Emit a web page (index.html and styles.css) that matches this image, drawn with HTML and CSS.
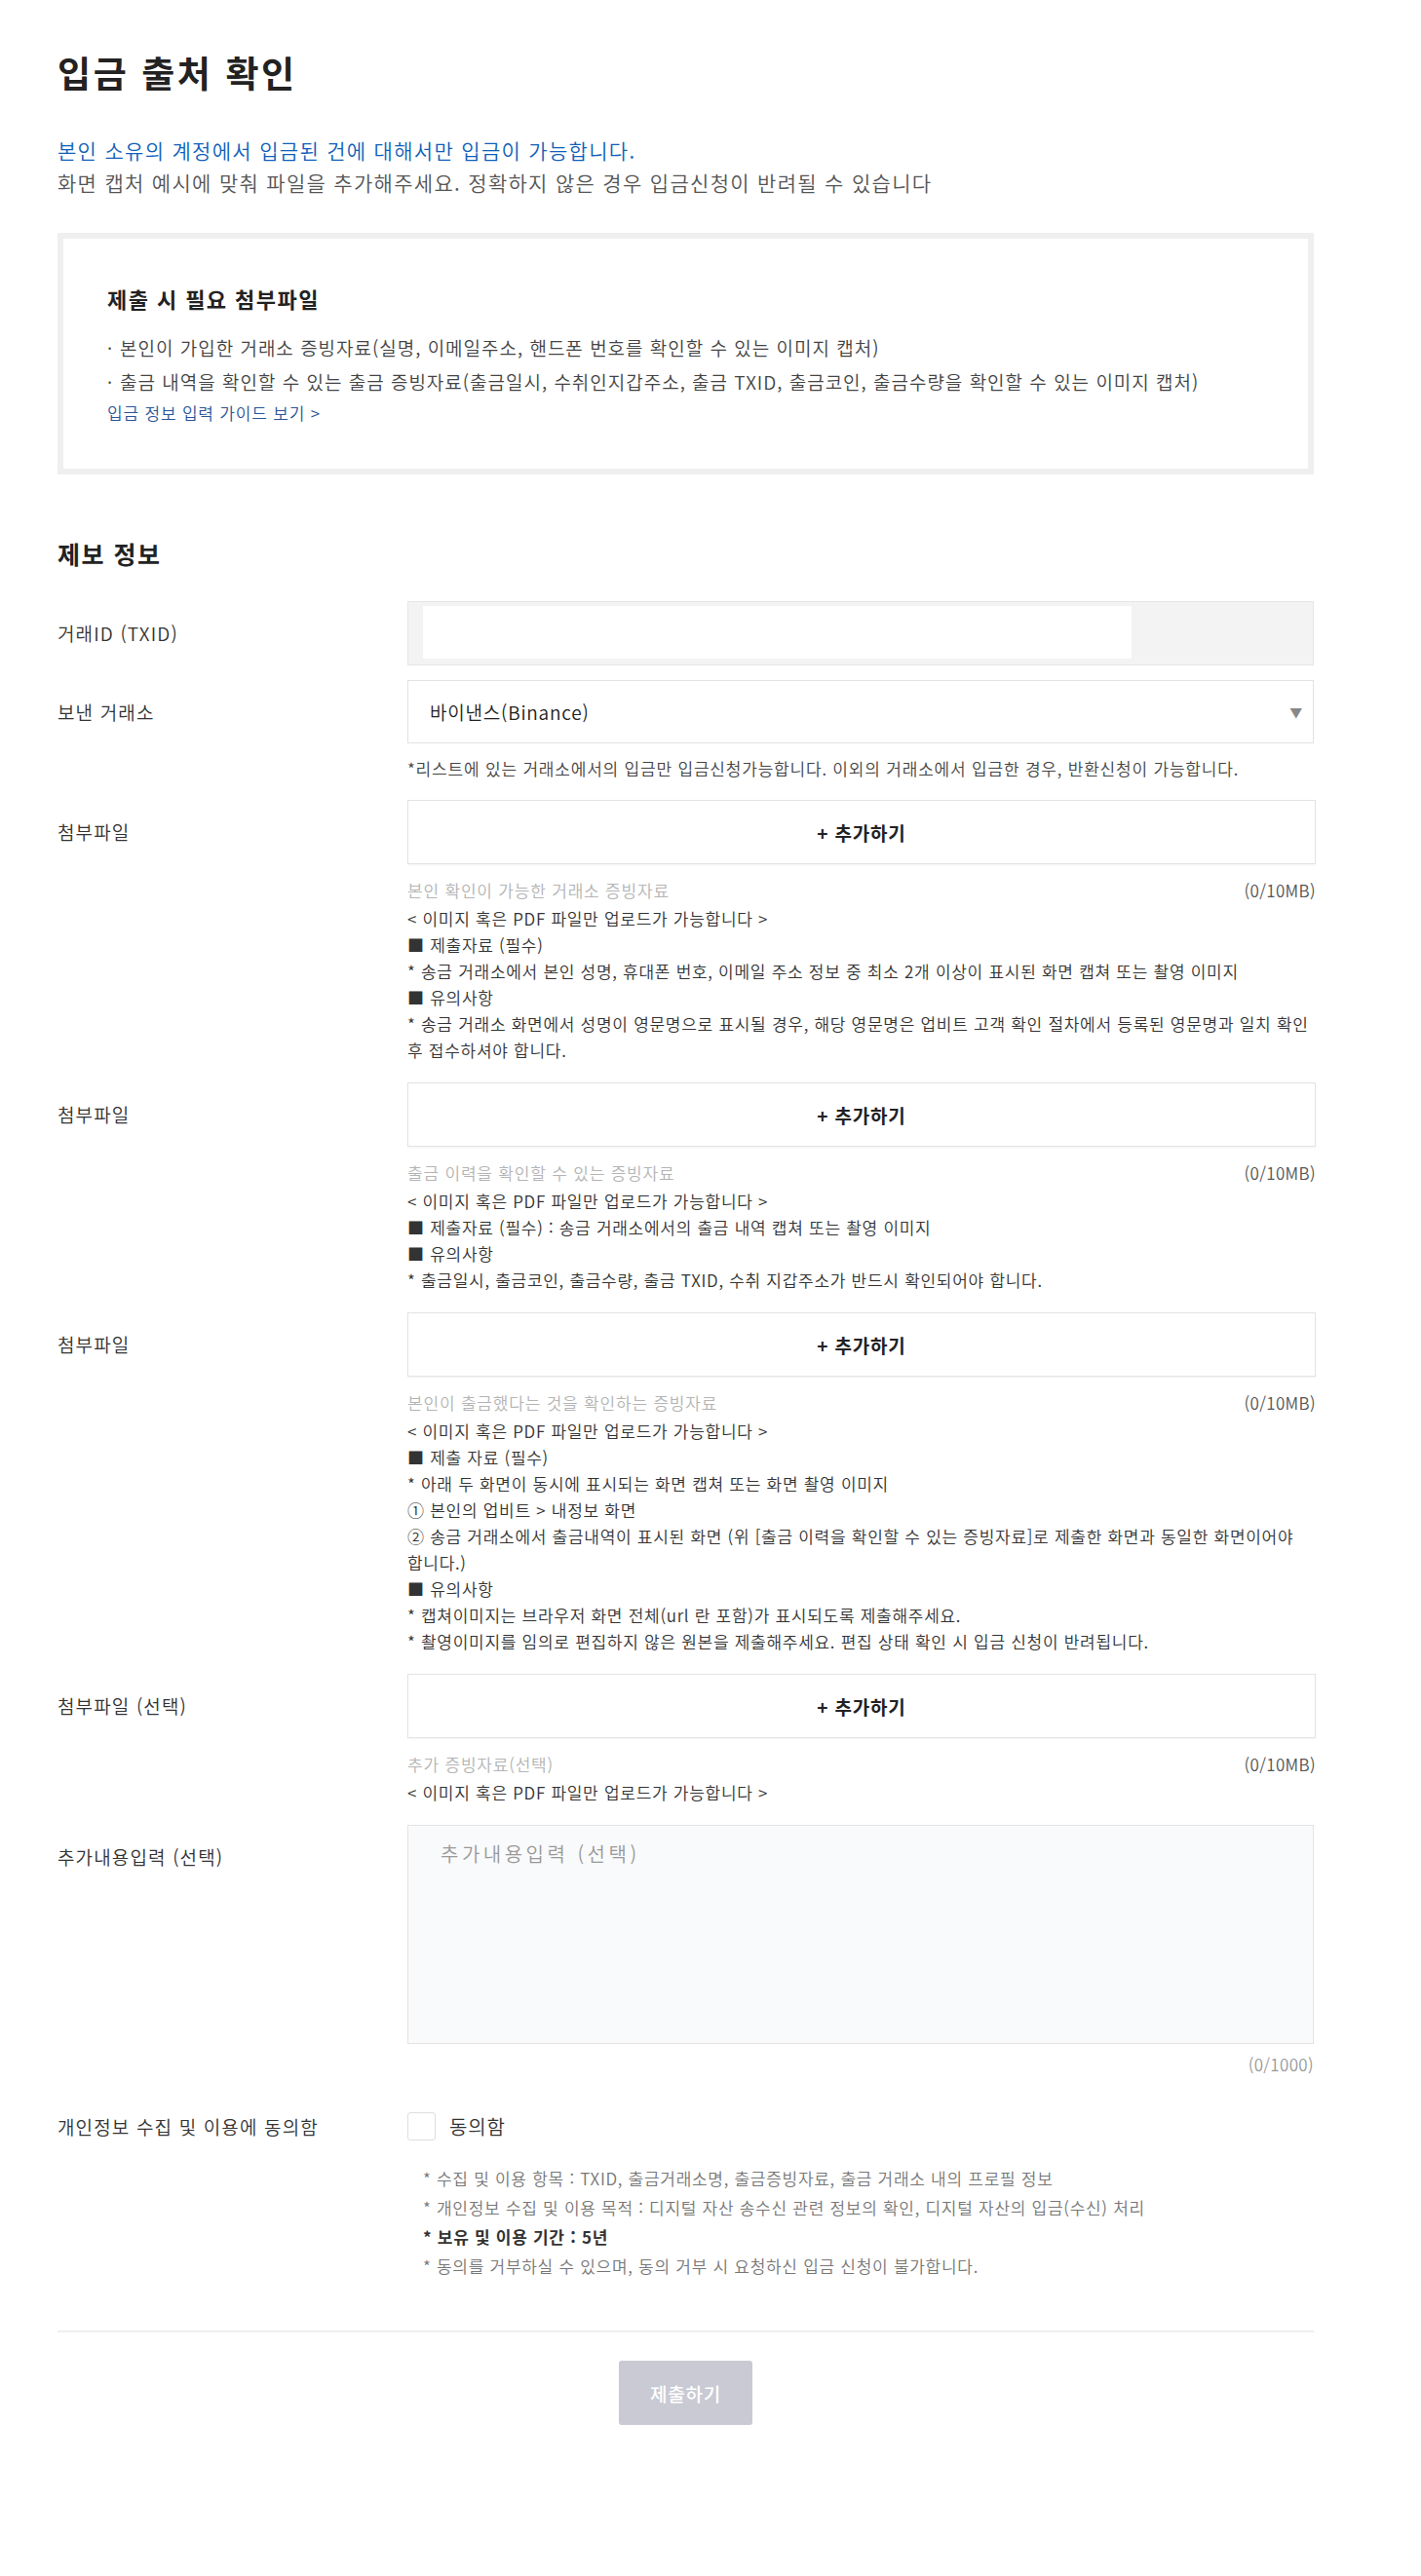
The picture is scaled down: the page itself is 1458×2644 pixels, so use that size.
FILE: index.html
```html
<!DOCTYPE html>
<html lang="ko">
<head>
<meta charset="UTF-8" />
<meta name="viewport" content="width=device-width, initial-scale=1" />
<title>입금 출처 확인</title>
<link rel="stylesheet" href="styles.css">
</head>
<body>

<div class="page">
  <h1 class="title">입금 출처 확인</h1>

  <p class="intro">
    <span class="intro-strong">본인 소유의 계정에서 입금된 건에 대해서만 입금이 가능합니다.</span><br>
    화면 캡처 예시에 맞춰 파일을 추가해주세요. 정확하지 않은 경우 입금신청이 반려될 수 있습니다
  </p>

  <!-- Required files -->
  <div class="guide-box">
    <h3>제출 시 필요 첨부파일</h3>
    <ul class="guide-list">
      <li>본인이 가입한 거래소 증빙자료(실명, 이메일주소, 핸드폰 번호를 확인할 수 있는 이미지 캡처)</li>
      <li>출금 내역을 확인할 수 있는 출금 증빙자료(출금일시, 수취인지갑주소, 출금 TXID, 출금코인, 출금수량을 확인할 수 있는 이미지 캡처)</li>
    </ul>
    <a href="#" class="guide-link">입금 정보 입력 가이드 보기 &gt;</a>
  </div>

  <h2 class="section-title">제보 정보</h2>

  <form class="report-form" onsubmit="return false">

    <div class="row">
      <label class="row-label">거래ID (TXID)</label>
      <div class="row-field">
        <div class="txid-input"><div class="txid-mask"></div></div>
      </div>
    </div>

    <div class="row">
      <label class="row-label">보낸 거래소</label>
      <div class="row-field">
        <div class="select-box">
          <span>바이낸스(Binance)</span>
          <span class="select-arrow">▼</span>
        </div>
        <p class="select-note">*리스트에 있는 거래소에서의 입금만 입금신청가능합니다. 이외의 거래소에서 입금한 경우, 반환신청이 가능합니다.</p>
      </div>
    </div>

    <div class="row">
      <label class="row-label">첨부파일</label>
      <div class="row-field">
        <button type="button" class="upload-btn">+ 추가하기</button>
        <div class="file-help"><span>본인 확인이 가능한 거래소 증빙자료</span><span class="file-size">(0/10MB)</span></div>
        <div class="file-desc">
          <p>&lt; 이미지 혹은 PDF 파일만 업로드가 가능합니다 &gt;</p>
          <p>■ 제출자료 (필수)</p>
          <p>* 송금 거래소에서 본인 성명, 휴대폰 번호, 이메일 주소 정보 중 최소 2개 이상이 표시된 화면 캡쳐 또는 촬영 이미지</p>
          <p>■ 유의사항</p>
          <p>* 송금 거래소 화면에서 성명이 영문명으로 표시될 경우, 해당 영문명은 업비트 고객 확인 절차에서 등록된 영문명과 일치 확인 후 접수하셔야 합니다.</p>
        </div>
      </div>
    </div>

    <div class="row">
      <label class="row-label">첨부파일</label>
      <div class="row-field">
        <button type="button" class="upload-btn">+ 추가하기</button>
        <div class="file-help"><span>출금 이력을 확인할 수 있는 증빙자료</span><span class="file-size">(0/10MB)</span></div>
        <div class="file-desc">
          <p>&lt; 이미지 혹은 PDF 파일만 업로드가 가능합니다 &gt;</p>
          <p>■ 제출자료 (필수) : 송금 거래소에서의 출금 내역 캡쳐 또는 촬영 이미지</p>
          <p>■ 유의사항</p>
          <p>* 출금일시, 출금코인, 출금수량, 출금 TXID, 수취 지갑주소가 반드시 확인되어야 합니다.</p>
        </div>
      </div>
    </div>

    <div class="row">
      <label class="row-label">첨부파일</label>
      <div class="row-field">
        <button type="button" class="upload-btn">+ 추가하기</button>
        <div class="file-help"><span>본인이 출금했다는 것을 확인하는 증빙자료</span><span class="file-size">(0/10MB)</span></div>
        <div class="file-desc">
          <p>&lt; 이미지 혹은 PDF 파일만 업로드가 가능합니다 &gt;</p>
          <p>■ 제출 자료 (필수)</p>
          <p>* 아래 두 화면이 동시에 표시되는 화면 캡쳐 또는 화면 촬영 이미지</p>
          <p>① 본인의 업비트 &gt; 내정보 화면</p>
          <p>② 송금 거래소에서 출금내역이 표시된 화면 (위 [출금 이력을 확인할 수 있는 증빙자료]로 제출한 화면과 동일한 화면이어야 합니다.)</p>
          <p>■ 유의사항</p>
          <p>* 캡쳐이미지는 브라우저 화면 전체(url 란 포함)가 표시되도록 제출해주세요.</p>
          <p>* 촬영이미지를 임의로 편집하지 않은 원본을 제출해주세요. 편집 상태 확인 시 입금 신청이 반려됩니다.</p>
        </div>
      </div>
    </div>

    <div class="row">
      <label class="row-label">첨부파일 (선택)</label>
      <div class="row-field">
        <button type="button" class="upload-btn">+ 추가하기</button>
        <div class="file-help"><span>추가 증빙자료(선택)</span><span class="file-size">(0/10MB)</span></div>
        <div class="file-desc">
          <p>&lt; 이미지 혹은 PDF 파일만 업로드가 가능합니다 &gt;</p>
        </div>
      </div>
    </div>

    <div class="row">
      <label class="row-label" for="memo">추가내용입력 (선택)</label>
      <div class="row-field">
        <textarea id="memo" class="memo" placeholder="추가내용입력 (선택)"></textarea>
        <div class="memo-count">(0/1000)</div>
      </div>
    </div>

    <div class="row row-consent">
      <label class="row-label">개인정보 수집 및 이용에 동의함</label>
      <div class="row-field">
        <label class="agree">
          <input type="checkbox" />
          <span class="agree-box"></span>
          동의함
        </label>
        <ul class="consent-notes">
          <li>* 수집 및 이용 항목 : TXID, 출금거래소명, 출금증빙자료, 출금 거래소 내의 프로필 정보</li>
          <li>* 개인정보 수집 및 이용 목적 : 디지털 자산 송수신 관련 정보의 확인, 디지털 자산의 입금(수신) 처리</li>
          <li class="strong">* 보유 및 이용 기간 : 5년</li>
          <li>* 동의를 거부하실 수 있으며, 동의 거부 시 요청하신 입금 신청이 불가합니다.</li>
        </ul>
      </div>
    </div>

    <div class="form-footer">
      <button type="submit" class="submit-btn" disabled>제출하기</button>
    </div>
  </form>
</div>

</body>
</html>
```

FILE: styles.css
```css
/* Reset & base */
*, *::before, *::after {
  box-sizing: border-box;
}
body {
  margin: 0;
  font-family: "Noto Sans CJK KR", "Noto Sans", sans-serif;
  font-weight: 350;
  letter-spacing: 0.05em;
  background: #fff;
  color: #333;
  word-break: keep-all;
}
p, ul, h1, h2, h3 {
  margin: 0;
  padding: 0;
}
ul {
  list-style: none;
}

/* Page */
.page {
  width: 1291px;
  margin-left: 59px;
  padding: 50px 0 154px;
}

.title {
  font-size: 37px;
  line-height: 48px;
  font-weight: 700;
  letter-spacing: 0.07em;
  color: #222;
}

.intro {
  margin-top: 40px;
  font-size: 21px;
  line-height: 33px;
  letter-spacing: 0.062em;
  color: #555;
}
.intro-strong {
  color: #0f5fb9;
}

/* Required files box */
.guide-box {
  width: 1289px;
  margin-top: 35px;
  border: 6px solid #efefef;
  padding: 46px 45px 45px;
}
.guide-box h3 {
  font-size: 22px;
  line-height: 30px;
  font-weight: 700;
  letter-spacing: 0.065em;
  color: #222;
}
.guide-list {
  margin-top: 18px;
}
.guide-list li {
  font-size: 19px;
  line-height: 35px;
  letter-spacing: 0.052em;
  color: #444;
}
.guide-list li::before {
  content: "·";
  display: inline-block;
  width: 13px;
}
.guide-link {
  display: inline-block;
  margin-top: 3px;
  font-size: 17px;
  line-height: 24px;
  color: #2a5597;
  text-decoration: none;
}

.section-title {
  margin-top: 64px;
  font-size: 25px;
  line-height: 34px;
  font-weight: 700;
  letter-spacing: 0.06em;
  color: #222;
}

/* Form rows */
.report-form {
  margin-top: 32px;
}
.row {
  display: grid;
  grid-template-columns: 359px 932px;
  margin-bottom: 20px;
}
.row:first-child {
  margin-bottom: 15px;
}
.row-label {
  padding-top: 19px;
  font-size: 19px;
  line-height: 28px;
  letter-spacing: 0.06em;
  color: #333;
}

.txid-input {
  width: 930px;
  height: 66px;
  background: #f3f3f3;
  border: 1px solid #e6e6e6;
  padding: 4px 15px 6px;
}
.txid-mask {
  width: 727px;
  height: 100%;
  background: #fff;
}

.select-box {
  display: flex;
  align-items: center;
  justify-content: space-between;
  width: 930px;
  height: 65px;
  padding: 0 10px 0 22px;
  border: 1px solid #e2e2e2;
  font-size: 19px;
  color: #222;
}
.select-arrow {
  font-size: 13px;
  color: #888;
}
.select-note {
  margin-top: 14px;
  font-size: 17px;
  line-height: 24px;
  color: #444;
}

.upload-btn {
  display: block;
  width: 932px;
  height: 66px;
  border: 1px solid #e3e3e3;
  background: #fff;
  box-shadow: 0 1px 2px rgb(0 0 0 / 0.05);
  font-family: inherit;
  font-size: 19px;
  font-weight: 700;
  letter-spacing: inherit;
  color: #222;
  cursor: pointer;
}
.file-help {
  display: flex;
  justify-content: space-between;
  margin: 13px 0 2px;
  font-size: 17px;
  line-height: 27px;
  color: #b4b4b4;
}
.file-size {
  color: #555;
  letter-spacing: 0.02em;
}
.file-desc p {
  font-size: 17px;
  line-height: 27px;
  letter-spacing: 0.042em;
  color: #333;
}

.memo {
  display: block;
  width: 930px;
  height: 225px;
  padding: 14px 33px;
  border: 1px solid #e3e3e3;
  background: #f9fafb;
  resize: none;
  font-family: inherit;
  font-size: 20px;
  font-weight: 350;
  letter-spacing: 3.5px;
  line-height: 30px;
}
.memo::placeholder {
  color: #999;
}
.memo-count {
  width: 930px;
  margin-top: 9px;
  text-align: right;
  font-size: 17px;
  line-height: 24px;
  letter-spacing: 0.02em;
  color: #999;
}

/* Consent */
.row-consent {
  margin-top: 37px;
}
.row-consent .row-label {
  padding-top: 0;
  line-height: 29px;
}
.agree {
  display: flex;
  align-items: center;
  gap: 14px;
  height: 29px;
  font-size: 20px;
  color: #333;
}
.agree input {
  display: none;
}
.agree-box {
  width: 29px;
  height: 29px;
  border: 1px solid #dedede;
  border-radius: 3px;
  background: #fff;
}
.consent-notes {
  margin-top: 24px;
  padding-left: 16px;
}
.consent-notes li {
  font-size: 17px;
  line-height: 30px;
  letter-spacing: 0.042em;
  color: #777;
}
.consent-notes li.strong {
  font-weight: 700;
  color: #333;
}

/* Submit */
.form-footer {
  width: 1289px;
  margin-top: 51px;
  padding-top: 29px;
  border-top: 2px solid #eee;
  text-align: center;
}
.submit-btn {
  width: 137px;
  height: 66px;
  border: none;
  border-radius: 3px;
  background: #c9cad4;
  font-family: inherit;
  font-size: 19px;
  font-weight: 500;
  letter-spacing: inherit;
  color: #fff;
}
```
